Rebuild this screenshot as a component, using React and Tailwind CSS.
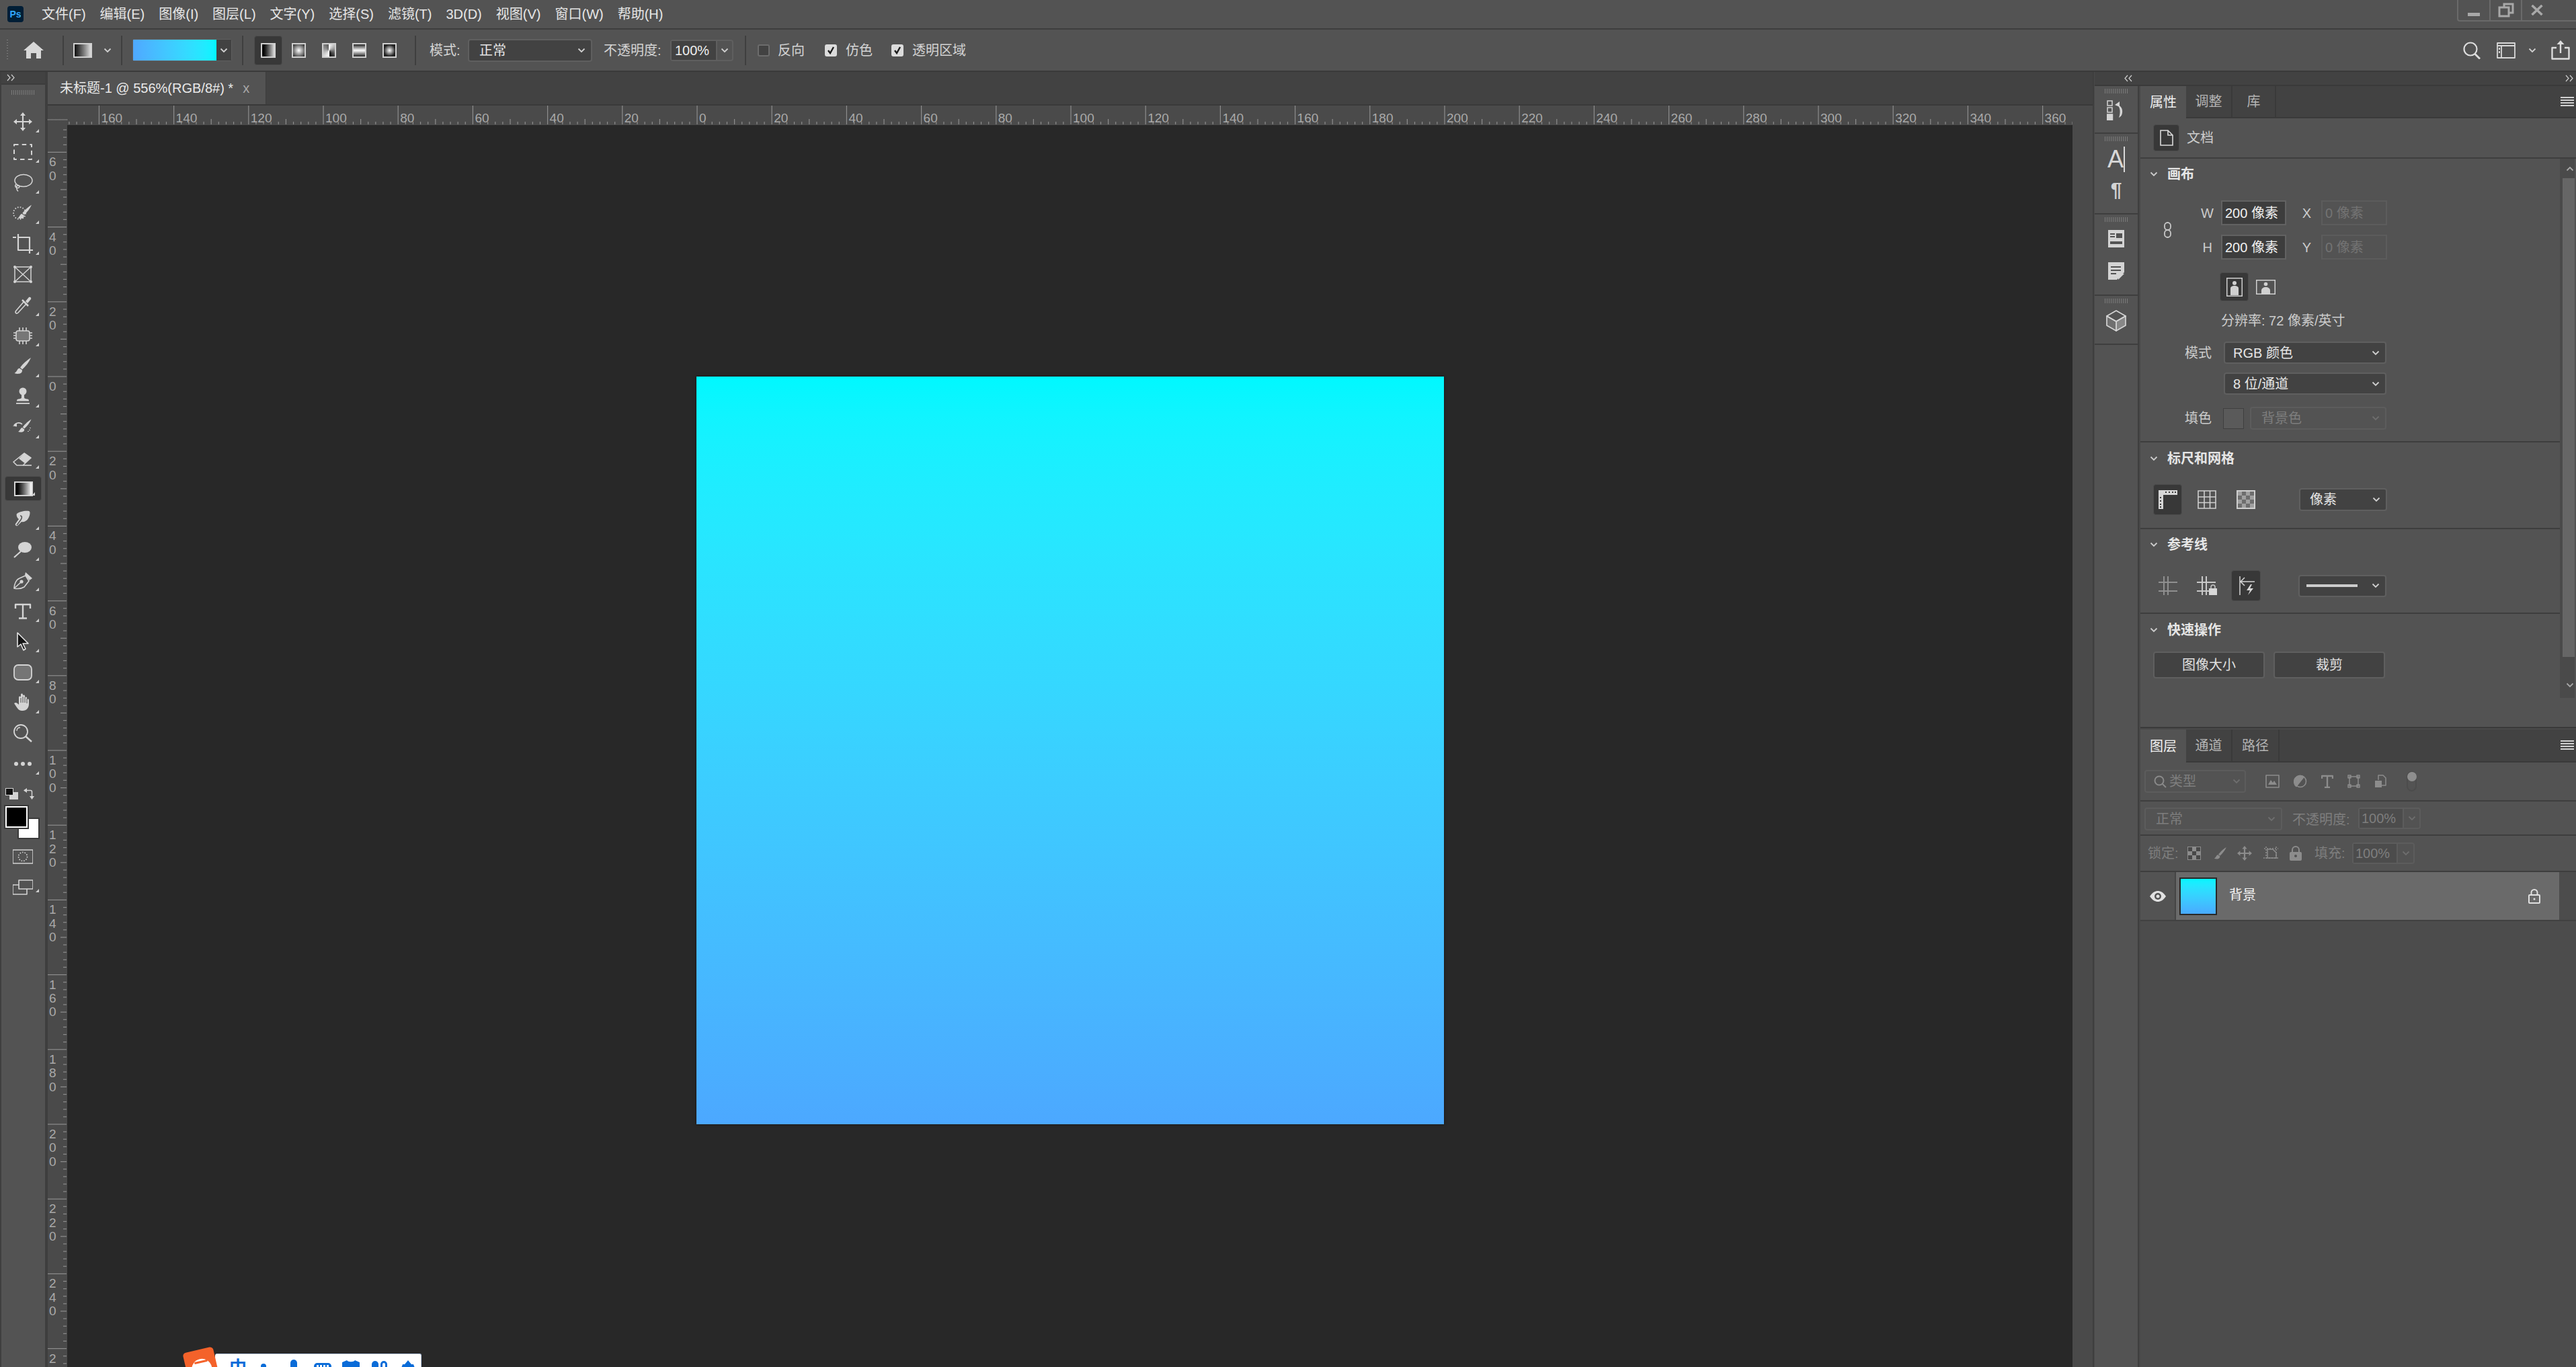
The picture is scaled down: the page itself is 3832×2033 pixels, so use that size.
import React from "react";

const C = "#d4d4d4";

function Chev({ className = "", color = "#cfcfcf" }) {
  return (
    <svg viewBox="0 0 12 8" className={"w-[12px] h-[8px] shrink-0 " + className} fill="none" stroke={color} strokeWidth="1.8">
      <path d="M1.5 1.5 6 6l4.5-4.5" />
    </svg>
  );
}

function Sel({ className = "", children, dis }) {
  return (
    <div className={"flex items-center justify-between border-2 rounded-[4px] pl-[12px] pr-[8px] " + (dis ? "border-[#5c5c5c] text-[#7e7e7e] " : "border-[#5f5f5f] bg-[#424242] text-[#e6e6e6] ") + className}>
      <span className="whitespace-pre">{children}</span>
      <Chev color={dis ? "#6e6e6e" : "#cfcfcf"} />
    </div>
  );
}

function Ico({ children, className = "w-[30px] h-[30px]", stroke = C, sw = 1.7, vb = "0 0 30 30", fill = "none" }) {
  return (
    <svg viewBox={vb} className={"shrink-0 " + className} fill={fill} stroke={stroke} strokeWidth={sw} strokeLinejoin="round">
      {children}
    </svg>
  );
}

const Brush = ({ t = "" }) => (
  <g transform={t} stroke="none" fill={C}>
    <path d="M27 2C22 5 15 11 11 16.500l3 3C19 15 24 9 27 2Z" />
    <path d="M10 17.500C6.500 18 6.500 23 2.500 25c5 2 12 1 11.500-4.500Z" />
  </g>
);

const toolIcons = [
  <Ico key="move">
    <path d="M15 4v22M4 15h22" strokeWidth="2.2" />
    <path d="M15 1l4 5h-8zM15 29l4-5h-8zM1 15l5-4v8zM29 15l-5-4v8z" fill={C} stroke="none" />
  </Ico>,
  <Ico key="marq" sw="2">
    <rect x="2" y="4" width="26" height="22" strokeDasharray="6.500 5.200" />
  </Ico>,
  <Ico key="lasso" sw="1.500">
    <ellipse cx="16" cy="11.500" rx="13" ry="9" />
    <path d="M5 17c-3 3 0 6 3 5.500 3-.5 2-4-1-3.500-2 .5-2 6 1 8.500" />
  </Ico>,
  <Ico key="qs">
    <circle cx="10" cy="15" r="9" strokeDasharray="1.600 2.300" strokeWidth="1.800" />
    <Brush t="translate(5 1) scale(.85)" />
  </Ico>,
  <Ico key="crop" sw="2.200">
    <path d="M0 5h5M8 0v24h18M8 5h17v24M26 24h4" />
  </Ico>,
  <Ico key="frame" sw="1.500">
    <path d="M3 4h24v22H3zM3 4l24 22M27 4 3 26" />
    <g fill={C} stroke="none">
      <circle cx="3" cy="4" r="2" /><circle cx="27" cy="4" r="2" /><circle cx="3" cy="26" r="2" /><circle cx="27" cy="26" r="2" />
    </g>
  </Ico>,
  <Ico key="eye" sw="1.600">
    <path d="M17 9 5 23c-1.500 2-1 3-.5 3.500s2 1 3.500-.5L20 13" />
    <path d="M14 7l9 9" strokeWidth="2.500" />
    <path d="M19 9l5-6c2-1 4 1 3 3l-5 6z" fill={C} stroke="none" />
  </Ico>,
  <Ico key="patch" sw="1.600">
    <rect x="5" y="8" width="20" height="15" rx="3" fill="#777" />
    <path d="M1 11h4M1 15h4M1 19h4M25 11h4M25 15h4M25 19h4M10 3v5M15 3v5M20 3v5M10 23v5M15 23v5M20 23v5" />
  </Ico>,
  <Ico key="brush"><Brush /></Ico>,
  <Ico key="stamp">
    <g fill={C} stroke="none">
      <circle cx="15" cy="7" r="5.500" />
      <path d="M13 11h4v5c0 2 2 2 5 2.500 2 .5 2 2 2 3H6c0-1 0-2.500 2-3 3-.5 5-.5 5-2.500z" />
      <rect x="5" y="24" width="20" height="1.800" />
    </g>
  </Ico>,
  <Ico key="hist">
    <Brush t="translate(6 1) scale(.8)" />
    <path d="M2 11c4-4 9-4 12-1" fill="none" />
    <path d="M0 12.500l6-4v5z" fill={C} stroke="none" />
    <path d="M26 15v1M25 18v1M23 20v1" strokeDasharray="1 2" />
  </Ico>,
  <Ico key="erase" sw="1.600">
    <path d="M1 21 17 8l10 7-12 11H6z" />
    <path d="M17 8l10 7-9 8-9-7z" fill={C} stroke="none" />
    <path d="M15 26h13" />
  </Ico>,
  null,
  <Ico key="smudge">
    <path d="M6 7c4-3 12-5 18-4 3 1 1 8-1 11-2 4-7 6-10 5l-6 6c-2 1-4-1-3-3l5-7c-3-2-4-6-3-8z" fill={C} stroke="none" />
    <path d="M11 10c3 0 3 3 1 6l-6 8" stroke="#535353" strokeWidth="1.600" />
  </Ico>,
  <Ico key="dodge" sw="2.200">
    <ellipse cx="18" cy="11" rx="10" ry="8" fill={C} stroke="none" />
    <path d="M12 17 2 26" />
  </Ico>,
  <Ico key="pen" sw="1.600">
    <path d="M2 27c0-6 3-13 8-15l9-4 5 8-7 9c-5 3-10 3-15 2z" />
    <path d="M2 27 12 18" />
    <circle cx="13" cy="17" r="1.800" fill={C} />
    <path d="M19 3l-1 4 7 8 4-3z" fill={C} stroke="none" />
  </Ico>,
  <Ico key="t" sw="2.600">
    <path d="M15 5v20M4 11V5h22v6M9 25.500h12" strokeWidth="2.400" />
  </Ico>,
  <Ico key="sel" sw="1.600" stroke="#e4e4e4">
    <path d="M7 2v21l5-4 4 9 3-2-4-8h8z" fill="#141414" />
  </Ico>,
  <Ico key="rect" sw="1.800">
    <rect x="2" y="4" width="26" height="22" rx="6" fill="#757575" />
  </Ico>,
  <Ico key="hand">
    <path d="M2 16c2-2 4-1 6 1l1 1V7c0-2 3-2 3 0V3c0-2 3-2 3 0v2c0-2 3-2 3 0v3c0-2 3-2 3 0v3c0-2 3-2 3 0v6c0 6-4 10-9 10s-7-2-9-5z" fill={C} stroke="none" />
    <path d="M12 8v7M15 6v9M18 7v8M21 9v7" stroke="#535353" strokeWidth="1" />
  </Ico>,
  <Ico key="zoom" sw="1.800">
    <circle cx="12" cy="12" r="10" />
    <path d="M6 11c0-3 2-5 5-5" strokeWidth="1.300" />
    <path d="M19 19l9 8" strokeWidth="2.400" />
  </Ico>,
  <Ico key="more">
    <g fill={C} stroke="none"><circle cx="5" cy="15" r="3" /><circle cx="15" cy="15" r="3" /><circle cx="25" cy="15" r="3" /></g>
  </Ico>,
];

const hasCorner = [1,1,1,1,1,0,1,1,1,1,1,1,0,1,1,1,1,1,1,1,0,1];

function Toolbar() {
  return (
    <div className="w-[67px] shrink-0 flex flex-col bg-[#535353] border-l-2 border-[#3f3f3f]">
      <div className="h-[19px] bg-[#424242] border-b-2 border-[#3c3c3c] flex items-center pl-[8px] shrink-0">
        <Collapse dir="right" />
      </div>
      <Grip className="mt-[8px] ml-[15px]" />
      <div className="mt-[17px] flex flex-col">
        {toolIcons.map((ic, i) =>
          ic ? (
            <div key={i} className="relative h-[45.500px] flex items-center justify-center pr-[2px]">
              {ic}
              {hasCorner[i] ? <Corner /> : null}
            </div>
          ) : (
            <div key={i} className="relative h-[37px] my-[4.250px] mx-[5px] flex items-center justify-center bg-[#383838] border border-[#4d4d4d] rounded-[4px]">
              <div className="w-[28px] h-[22px] border-2 border-[#d4d4d4] bg-linear-to-r from-black to-white" />
              <Corner />
            </div>
          )
        )}
      </div>
      <div className="relative mt-[8px] h-[26px] flex items-center justify-between pl-[6px] pr-[14px]">
        <div className="relative w-[19px] h-[17px]">
          <div className="absolute right-0 bottom-0 w-[13px] h-[11px] bg-[#d4d4d4]" />
          <div className="absolute left-0 top-0 w-[12px] h-[11px] bg-[#111] border border-[#d4d4d4]" />
        </div>
        <Ico className="w-[18px] h-[18px]" vb="0 0 18 18" sw="1.500">
          <path d="M1 4.500h9.500a2 2 0 0 1 2 2V16" />
          <path d="M0 4.500 5 1v7zM12.500 18 9 13h7z" fill={C} stroke="none" />
        </Ico>
      </div>
      <div className="relative mt-[6px] h-[50px]">
        <div className="absolute left-[24px] top-[17px] w-[33px] h-[32px] bg-white border-2 border-[#3a3a3a]" />
        <div className="absolute left-[6px] top-0 w-[33px] h-[32px] bg-black border-2 border-white outline-2 outline-[#3a3a3a]" />
      </div>
      <div className="flex justify-center mt-[10px] pr-[2px]">
        <Ico sw="1.600">
          <rect x="0" y="5" width="30" height="20" />
          <circle cx="15" cy="15" r="6.500" strokeDasharray="1.600 2" />
        </Ico>
      </div>
      <div className="relative flex justify-center mt-[15px] pr-[2px]">
        <Ico sw="1.600">
          <path d="M0 12h21v14H0z" />
          <path d="M9 5h21v13H9z" fill="#535353" />
        </Ico>
        <Corner />
      </div>
    </div>
  );
}

function Corner() {
  return <div className="absolute right-[9px] bottom-[7px] w-0 h-0 border-l-[5px] border-l-transparent border-b-[5px] border-b-[#cfcfcf]" />;
}

function Grip({ className = "" }) {
  return <div className={"w-[34px] h-[7px] shrink-0 bg-[repeating-linear-gradient(90deg,#7c7c7c_0,#7c7c7c_1px,transparent_1px,transparent_3px)] " + className} />;
}

function Collapse({ dir }) {
  const d = dir === "right" ? "M1 1l4 4.500-4 4.500M7 1l4 4.500-4 4.500" : "M5 1 1 5.500 5 10M11 1 7 5.500 11 10";
  return (
    <svg viewBox="0 0 12 11" className="w-[12px] h-[11px]" fill="none" stroke="#cfcfcf" strokeWidth="1.200">
      <path d={d} />
    </svg>
  );
}

function Sep() {
  return <div className="w-[2px] h-[44px] bg-[#3f3f3f] shrink-0" />;
}

const gradientTypes = [
  "bg-linear-to-r from-black to-[#dddddd]",
  "bg-[radial-gradient(circle,#ffffff,#222222)]",
  "bg-[conic-gradient(#ffffff,#000000_50%,#ffffff_50%,#555555)]",
  "bg-[linear-gradient(180deg,#222222,#ffffff_50%,#222222)]",
  "bg-[radial-gradient(circle,#ffffff,#222222_70%)]",
];

function Check({ on }) {
  return (
    <div className={"w-[18px] h-[18px] rounded-[3px] border-2 flex items-center justify-center shrink-0 " + (on ? "bg-[#dcdcdc] border-[#dcdcdc]" : "bg-[#424242] border-[#6c6c6c]")}>
      {on ? (
        <svg viewBox="0 0 12 12" className="w-[12px] h-[12px]" fill="none" stroke="#1c1c1c" strokeWidth="2.400">
          <path d="M2 6l3 4 5-9" />
        </svg>
      ) : null}
    </div>
  );
}

function OptionsBar() {
  return (
    <div className="h-[61px] shrink-0 bg-[#535353] flex items-center text-[20px] text-[#d4d4d4]">
      <div className="ml-[10px] w-[2px] h-[32px] bg-[repeating-linear-gradient(180deg,#7c7c7c_0,#7c7c7c_1px,transparent_1px,transparent_4px)]" />
      <svg viewBox="0 0 30 25" className="ml-[23px] w-[30px] h-[25px]" fill="#d8d8d8">
        <path d="M15 0 30 13h-4v12h-7v-8h-8v8H4V13H0z" />
      </svg>
      <div className="ml-[28px]"><Sep /></div>
      <div className="ml-[14px] w-[28px] h-[22px] border-2 border-[#d0d0d0] bg-linear-to-r from-[#111] to-[#dddddd]" />
      <Chev className="ml-[17px]" />
      <div className="ml-[14px]"><Sep /></div>
      <div className="ml-[15px] flex h-[33px] w-[148px] border border-[#5f5f5f] rounded-[3px]">
        <div className="w-[124px] bg-linear-to-r from-[#4fa8ff] to-[#00f6ff]" />
        <div className="flex-1 bg-[#424242] flex items-center justify-center"><Chev /></div>
      </div>
      <div className="ml-[15px]"><Sep /></div>
      <div className="ml-[16px] w-[42px] h-[44px] bg-[#383838] border border-[#4d4d4d] rounded-[4px] flex items-center justify-center">
        <div className={"w-[22px] h-[22px] border-2 border-[#d0d0d0] " + gradientTypes[0]} />
      </div>
      <div className="ml-[14px] flex gap-[24px]">
        {gradientTypes.slice(1).map((g, i) => (
          <div key={i} className={"w-[21px] h-[22px] border-2 border-[#d0d0d0] " + g} />
        ))}
      </div>
      <div className="ml-[27px]"><Sep /></div>
      <span className="ml-[20px] w-[47px]">模式:</span>
      <Sel className="ml-[10px] w-[185px] h-[34px] pl-[15px]">正常</Sel>
      <span className="ml-[17px] w-[90px] whitespace-nowrap">不透明度:</span>
      <div className="ml-[9px] w-[94px] h-[32px] flex border-2 border-[#5f5f5f] rounded-[4px]">
        <div className="w-[68px] bg-[#424242] border-r-2 border-[#5f5f5f] text-[#eeeeee] pl-[5px] flex items-center">100%</div>
        <div className="flex-1 flex items-center justify-center"><Chev /></div>
      </div>
      <div className="ml-[17px]"><Sep /></div>
      <div className="ml-[17px]"><Check /></div>
      <span className="ml-[12px]">反向</span>
      <div className="ml-[30px]"><Check on /></div>
      <span className="ml-[13px]">仿色</span>
      <div className="ml-[28px]"><Check on /></div>
      <span className="ml-[13px]">透明区域</span>
      <div className="ml-auto flex items-center">
        <Ico className="w-[26px] h-[26px]" vb="0 0 26 26" stroke="#dddddd" sw="2.200">
          <circle cx="11" cy="11" r="9.500" />
          <path d="M17.500 18 25 25.500" strokeWidth="2.800" />
        </Ico>
        <Ico className="ml-[24px] w-[28px] h-[24px]" vb="0 0 28 24" stroke="#d8d8d8" sw="1.800">
          <path d="M1 1h26v22H1zM1 5h26M7 5v18" />
          <path d="M3 8h2v3H3zM3 13h2v3H3z" fill="#d8d8d8" stroke="none" />
        </Ico>
        <Chev className="ml-[19px]" />
        <Ico className="ml-[22px] mr-[9px] w-[28px] h-[29px]" vb="0 0 28 29" stroke="#dddddd" sw="2.400">
          <path d="M8 11H1.500v16.500h25V11H20M14 19V2" />
          <path d="M14 0l5.500 6h-11z" fill="#dddddd" stroke="none" />
        </Ico>
      </div>
    </div>
  );
}

const menus = ["文件(F)", "编辑(E)", "图像(I)", "图层(L)", "文字(Y)", "选择(S)", "滤镜(T)", "3D(D)", "视图(V)", "窗口(W)", "帮助(H)"];

function MenuBar() {
  return (
    <div className="h-[42px] shrink-0 bg-[#535353] flex items-center text-[20px] text-[#e6e6e6]">
      <div className="ml-[11px] w-[24px] h-[24px] rounded-[4px] bg-[#001e36] flex items-center justify-center text-[14px] font-bold text-[#31a8ff]">Ps</div>
      <div className="ml-[27px] flex gap-[21px] whitespace-nowrap">
        {menus.map((m) => <span key={m}>{m}</span>)}
      </div>
      <div className="ml-auto self-start flex h-[32px] w-[177px] border-l-2 border-b-2 border-[#6a6a6a] rounded-bl-[4px]">
        <div className="w-[48px] border-r-2 border-[#6a6a6a] flex items-end justify-center pb-[6px]">
          <div className="w-[18px] h-[5px] bg-[#a8a8a8]" />
        </div>
        <div className="w-[47px] border-r-2 border-[#6a6a6a] flex items-center justify-center">
          <svg viewBox="0 0 24 22" className="w-[24px] h-[22px]" fill="none" stroke="#a8a8a8" strokeWidth="3">
            <path d="M9 6V2h13v13h-6M2 7h14v13H2z" />
          </svg>
        </div>
        <div className="w-[44px] flex items-center justify-center">
          <svg viewBox="0 0 18 16" className="w-[18px] h-[16px]" fill="none" stroke="#a8a8a8" strokeWidth="3.500">
            <path d="M1.500 1 16.500 15M16.500 1 1.500 15" />
          </svg>
        </div>
      </div>
    </div>
  );
}

const S = 5.56;
function range(a, b, st) {
  const r = [];
  for (let i = a; i <= b; i += st) r.push(i);
  return r;
}

function HRuler() {
  return (
    <svg width="2983" height="29" className="block shrink-0" stroke="#8d8d8d" strokeWidth="1.200" fontFamily="Liberation Sans" fontSize="19">
      {range(-180, 370, 2).map((u) => {
        const x = 937 + u * S;
        const h = u % 20 === 0 ? 28 : u % 10 === 0 ? 8 : 4;
        return <line key={u} x1={x} x2={x} y1={28 - h} y2={28} />;
      })}
      {range(-160, 360, 20).map((u) => (
        <text key={u} x={937 + u * S + 3} y={25} fill="#a9a9a9" stroke="none">{Math.abs(u)}</text>
      ))}
    </svg>
  );
}

function VRuler() {
  return (
    <svg width="29" height="1847" className="block shrink-0" stroke="#8d8d8d" strokeWidth="1.200" fontFamily="Liberation Sans" fontSize="19">
      {range(-66, 270, 2).map((u) => {
        const y = 374 + u * S;
        const major = u % 20 === 0;
        const med = u % 10 === 0;
        return <line key={u} y1={y} y2={y} x1={major ? 0 : med ? 19 : 23} x2={28} />;
      })}
      {range(-60, 260, 20).map((u) =>
        String(Math.abs(u)).split("").map((d, i) => (
          <text key={u + "-" + i} x="2" y={374 + u * S + 21 + i * 20.4} fill="#a9a9a9" stroke="none">{d}</text>
        ))
      )}
    </svg>
  );
}

function DocArea() {
  return (
    <div className="w-[3042px] shrink-0 flex flex-col bg-[#4a4a4a] border-r-0">
      <div className="h-[50px] shrink-0 bg-[#424242] border-b-2 border-[#393939]">
        <div className="w-[325px] h-[48px] bg-[#535353] border-r border-[#3c3c3c] flex items-center pl-[18px] text-[20px] text-[#e8e8e8] whitespace-nowrap">
          <span>未标题-1 @ 556%(RGB/8#) *</span>
          <span className="ml-[14px] text-[#a8a8a8]">x</span>
        </div>
      </div>
      <div className="h-[29px] shrink-0 flex">
        <div className="w-[29px] h-[29px] shrink-0 flex flex-col justify-end">
          <div className="h-[2px] mb-[7px] bg-[repeating-linear-gradient(90deg,#8d8d8d_0,#8d8d8d_1px,transparent_1px,transparent_2px)]" />
        </div>
        <HRuler />
      </div>
      <div className="flex-1 flex min-h-0 overflow-hidden">
        <VRuler />
        <div className="w-[2983px] shrink-0 bg-[#282828] flex justify-center items-start pt-[374px]">
          <div className="w-[1112px] h-[1112px] bg-linear-to-b from-[#00f8ff] to-[#4ca8ff] shadow-[0_0_4px_#00000080]" />
        </div>
      </div>
    </div>
  );
}

function DockSec({ h, children, className = "" }) {
  return (
    <div className={"border-b-2 border-[#3e3e3e] flex flex-col items-center pt-[4px] shrink-0 " + h + " " + className}>
      <Grip />
      {children}
    </div>
  );
}

function Dock() {
  return (
    <div className="w-[66px] shrink-0 bg-[#535353] flex flex-col border-r-2 border-[#3e3e3e]">
      <DockSec h="h-[71px]">
        <svg viewBox="0 0 28 30" className="mt-[10px] w-[28px] h-[30px]" fill="none" stroke={C} strokeWidth="1.500">
          <rect x="1" y="1" width="7" height="7" />
          <rect x="1" y="11" width="7" height="7" />
          <rect x="0.500" y="21" width="8" height="8.500" fill={C} />
          <path d="M16 7c5 1 8 6 7 12-.5 4-3 6-5 7 2-5 3-14-2-19z" fill={C} stroke="none" />
          <path d="M12 7l7-5v8z" fill={C} stroke="none" />
        </svg>
      </DockSec>
      <DockSec h="h-[120px]" >
        <div className="mt-[7px] flex items-end text-[36px] leading-[40px] text-[#d8d8d8]">
          <span>A</span><div className="w-[2px] h-[38px] bg-[#d8d8d8] mb-[1px]" />
        </div>
        <div className="mt-[9px] text-[30px] leading-[32px] text-[#d4d4d4] font-bold">¶</div>
      </DockSec>
      <DockSec h="h-[121px]">
        <svg viewBox="0 0 24 26" className="mt-[12px] w-[24px] h-[26px]" fill={C}>
          <path d="M0 0h24v26H0z" />
          <path d="M3 5h7v2H3zM3 9h7v2H3zM12 5h9v7h-9zM3 17h18v4H3z" fill="#535353" />
        </svg>
        <svg viewBox="0 0 24 26" className="mt-[22px] w-[24px] h-[26px]" fill={C}>
          <path d="M0 0h24v15l-11 11H0z" />
          <path d="M15 17h9l-9 9z" />
          <path d="M4 6h15v2H4zM4 11h15v2H4zM4 16h8v2H4z" fill="#535353" />
        </svg>
      </DockSec>
      <DockSec h="h-[73px]">
        <svg viewBox="0 0 30 32" className="mt-[10px] w-[30px] h-[32px]" fill="none" stroke={C} strokeWidth="1.700" strokeLinejoin="round">
          <path d="M15 17 29 9v14l-14 8z" fill="#888888" />
          <path d="M15 17 1 9v14l14 8z" fill="#707070" />
          <path d="M15 1 1 9l14 8 14-8z" />
        </svg>
      </DockSec>
    </div>
  );
}

function Tabs({ items, h }) {
  return (
    <div className={"flex shrink-0 bg-[#424242] border-b-2 border-[#3a3a3a] text-[20px] " + h}>
      {items.map(([t, w], i) => (
        <div key={t} className={"flex items-center justify-center shrink-0 " + w + (i === 0 ? " bg-[#535353] text-[#f0f0f0] h-[calc(100%+2px)]" : " text-[#b4b4b4] border-r-2 border-[#3a3a3a]")}>
          {t}
        </div>
      ))}
      <div className="ml-auto mr-[3px] mt-[16px] w-[20px] h-[14px] bg-[repeating-linear-gradient(180deg,#d0d0d0_0,#d0d0d0_2px,transparent_2px,transparent_4px)]" />
    </div>
  );
}

function Head({ children, h }) {
  return (
    <div className={"flex items-center pl-[13px] shrink-0 " + h}>
      <Chev className="w-[14px]" color="#cccccc" />
      <span className="ml-[13px] font-bold text-[#e6e6e6]">{children}</span>
    </div>
  );
}

function Field({ label, value, dis }) {
  return (
    <div className={"h-[37px] flex items-center border-2 pl-[4px] whitespace-pre " + (dis ? "w-[98px] border-[#5c5c5c] text-[#737373]" : "w-[97px] border-[#626262] bg-[#3d3d3d] text-[#f0f0f0]")}>
      {value}
    </div>
  );
}

function PropertiesBody() {
  return (
    <div className="h-[847px] shrink-0 flex text-[20px] text-[#cccccc] border-b-2 border-[#3a3a3a]">
      <div className="w-[624px] shrink-0 flex flex-col">
        {/* canvas */}
        <div className="h-[422px] shrink-0 border-b-2 border-[#3e3e3e] flex flex-col">
          <Head h="h-[46px]">画布</Head>
          <div className="mt-[16px] flex items-center pl-[34px]">
            <svg viewBox="0 0 13 24" className="w-[13px] h-[24px] shrink-0" fill="none" stroke="#c8c8c8" strokeWidth="1.800">
              <rect x="2" y="1" width="9" height="11" rx="4.500" />
              <rect x="2" y="12" width="9" height="11" rx="4.500" />
            </svg>
            <div className="flex flex-col gap-[14px]">
              <div className="flex items-center">
                <span className="w-[62px] text-right">W</span>
                <div className="ml-[11px]"><Field value="200 像素" /></div>
                <span className="w-[52px] text-right pr-[15px]">X</span>
                <Field dis value="0 像素" />
              </div>
              <div className="flex items-center">
                <span className="w-[62px] text-right pr-[2px]">H</span>
                <div className="ml-[11px]"><Field value="200 像素" /></div>
                <span className="w-[52px] text-right pr-[15px]">Y</span>
                <Field dis value="0 像素" />
              </div>
            </div>
          </div>
          <div className="mt-[19px] ml-[118px] flex items-center">
            <div className="w-[43px] h-[43px] rounded-[4px] bg-[#383838] border border-[#4d4d4d] flex items-center justify-center">
              <svg viewBox="0 0 24 28" className="w-[24px] h-[28px]" fill="#d0d0d0" stroke="#d0d0d0">
                <path d="M.75.75h22.500v26.500H.75z" fill="none" strokeWidth="1.500" />
                <circle cx="12" cy="8" r="3" stroke="none" />
                <path d="M6 26v-10c0-3 3-4 6-4s6 1 6 4v10z" stroke="none" />
              </svg>
            </div>
            <svg viewBox="0 0 29 22" className="ml-[11px] w-[29px] h-[22px]" fill="#d0d0d0" stroke="#d0d0d0">
              <path d="M.75.75h27.500v20.500H.75z" fill="none" strokeWidth="1.500" />
              <circle cx="14.500" cy="6.500" r="2.800" stroke="none" />
              <path d="M8 21v-5c0-3 3-5 6.500-5s6.500 2 6.500 5v5z" stroke="none" />
            </svg>
          </div>
          <div className="mt-[17px] h-[24px] ml-[120px] flex items-center">分辨率: 72 像素/英寸</div>
          <div className="mt-[19px] flex items-center">
            <span className="ml-[66px] w-[40px] whitespace-nowrap">模式</span>
            <Sel className="ml-[18px] w-[242px] h-[33px]">RGB 颜色</Sel>
          </div>
          <Sel className="mt-[13px] ml-[124px] w-[242px] h-[33px] shrink-0">8 位/通道</Sel>
          <div className="mt-[18px] flex items-center">
            <span className="ml-[66px] w-[40px] whitespace-nowrap">填色</span>
            <div className="ml-[17px] w-[31px] h-[31px] border border-[#3f3f3f] bg-[#5a5a5a]" />
            <Sel dis className="ml-[9px] w-[203px] h-[34px] pl-[15px]">背景色</Sel>
          </div>
        </div>
        {/* ruler */}
        <div className="h-[129px] shrink-0 border-b-2 border-[#3e3e3e] flex flex-col">
          <Head h="h-[48px]">标尺和网格</Head>
          <div className="mt-[14px] ml-[19px] flex items-center gap-[15px]">
            <div className="w-[43px] h-[46px] rounded-[4px] bg-[#383838] border border-[#4d4d4d] flex items-center justify-center">
              <svg viewBox="0 0 28 28" className="w-[28px] h-[28px]" fill="#d6d6d6">
                <path d="M0 0h28v7H7v21H0z" />
                <path d="M10 2h2v2h-2zM15 2h2v2h-2zM20 2h2v2h-2zM24 2h2v2h-2zM2 10h2v2H2zM2 15h2v2H2zM2 20h2v2H2zM2 24h2v2H2z" fill="#383838" />
              </svg>
            </div>
            <div className="w-[43px] flex justify-center">
              <svg viewBox="0 0 28 28" className="w-[28px] h-[28px]" fill="none" stroke="#cfcfcf" strokeWidth="1.600">
                <path d="M1 1h26v26H1zM10 1v26M18.500 1v26M1 10h26M1 18.500h26" />
              </svg>
            </div>
            <div className="w-[44px] flex justify-center">
              <div className="w-[28px] h-[28px] border-2 border-[#cfcfcf] bg-[length:12px_12px] bg-[conic-gradient(#6e6e6e_25%,#a0a0a0_0_50%,#6e6e6e_0_75%,#a0a0a0_0)]" />
            </div>
            <Sel className="ml-[42px] w-[131px] h-[34px] pl-[14px]">像素</Sel>
          </div>
        </div>
        {/* guides */}
        <div className="h-[126px] shrink-0 border-b-2 border-[#3e3e3e] flex flex-col">
          <Head h="h-[46px]">参考线</Head>
          <div className="mt-[15px] ml-[19px] flex items-center gap-[15px]">
            <div className="w-[43px] flex justify-center">
              <svg viewBox="0 0 28 28" className="w-[28px] h-[28px]" fill="none" stroke="#8f8f8f" strokeWidth="2">
                <path d="M8 0v28M14 0v28M0 9h28M0 22h28" />
              </svg>
            </div>
            <div className="w-[43px] flex justify-center">
              <svg viewBox="0 0 30 28" className="w-[30px] h-[28px]" fill="none" stroke="#c8c8c8" strokeWidth="2">
                <path d="M8 0v28M14 0v28M0 9h28M0 22h18" />
                <rect x="18" y="18" width="12" height="10" fill="#d8d8d8" stroke="none" />
                <path d="M21 18v-2a3 3 0 0 1 6 0v2" strokeWidth="1.500" />
              </svg>
            </div>
            <div className="w-[44px] h-[46px] rounded-[4px] bg-[#383838] border border-[#4d4d4d] flex items-center justify-center">
              <svg viewBox="0 0 30 30" className="w-[30px] h-[30px]" fill="none" stroke="#d4d4d4" strokeWidth="1.500">
                <path d="M6 1v28M6 9h22M7 9l6-6M7 9l6 6" />
                <path d="M22 13l-6 9h5l-3 7 8-10h-5l3-6z" fill="#d8d8d8" stroke="none" />
              </svg>
            </div>
            <div className="ml-[41px] w-[131px] h-[33px] rounded-[4px] border-2 border-[#5f5f5f] bg-[#424242] flex items-center justify-between pl-[10px] pr-[8px]">
              <div className="w-[76px] h-[4px] bg-[#cccccc]" />
              <Chev />
            </div>
          </div>
        </div>
        {/* quick */}
        <div className="flex flex-col">
          <Head h="h-[48px]">快速操作</Head>
          <div className="mt-[8px] ml-[19px] flex gap-[13px] text-[#e0e0e0]">
            <div className="w-[166px] h-[40px] rounded-[4px] bg-[#424242] border-2 border-[#5f5f5f] flex items-center justify-center">图像大小</div>
            <div className="w-[166px] h-[40px] rounded-[4px] bg-[#424242] border-2 border-[#5f5f5f] flex items-center justify-center">裁剪</div>
          </div>
        </div>
      </div>
      <div className="w-[22px] shrink-0 self-start h-[802px] bg-[#4a4a4a] flex flex-col">
        <div className="h-[29px] flex items-center justify-end pr-[1px]"><Chev className="rotate-180" color="#a8a8a8" /></div>
        <div className="ml-[4px] h-[712px] bg-[#666666]" />
        <div className="flex-1 flex items-center justify-end pr-[1px] pt-[22px]"><Chev color="#a8a8a8" /></div>
      </div>
    </div>
  );
}

function LayersPanel() {
  return (
    <div className="flex-1 flex flex-col min-h-0 text-[20px] bg-[#4c4c4c]">
      <Tabs items={[["图层", "w-[68px]"], ["通道", "w-[69px]"], ["路径", "w-[70px]"]]} h="h-[49px]" />
      <div className="h-[58px] shrink-0 bg-[#535353] border-b-2 border-[#3e3e3e] flex items-center pl-[6px]">
        <div className="w-[151px] h-[34px] border-2 border-[#5c5c5c] rounded-[4px] flex items-center justify-between pl-[12px] pr-[6px] text-[#7e7e7e]">
          <div className="flex items-center">
            <Ico className="w-[19px] h-[19px]" vb="0 0 19 19" stroke="#8a8a8a" sw="2">
              <circle cx="8" cy="8" r="6.500" /><path d="M13 13l5 5" />
            </Ico>
            <span className="ml-[4px]">类型</span>
          </div>
          <Chev color="#6e6e6e" />
        </div>
        <div className="ml-[29px] flex items-center gap-[21px]">
          <Ico className="w-[21px] h-[20px]" vb="0 0 21 20" stroke="#8c8c8c" sw="1.600">
            <path d="M1 1h19v18H1z" /><path d="M4 15l4-7 3 4 2-3 4 6z" fill="#8c8c8c" stroke="none" />
          </Ico>
          <Ico className="w-[20px] h-[20px]" vb="0 0 20 20" stroke="#8c8c8c" sw="1.600">
            <circle cx="10" cy="10" r="8.500" /><path d="M15 3.500 4 17.500a8.500 8.500 0 0 1 11-14z" fill="#8c8c8c" />
          </Ico>
          <Ico className="w-[18px] h-[20px]" vb="0 0 18 20" stroke="#8c8c8c" sw="2.400">
            <path d="M9 1v18M1 6V2h16v4M5 19h8" />
          </Ico>
          <Ico className="w-[19px] h-[20px]" vb="0 0 19 20" stroke="#8c8c8c" sw="1.500">
            <path d="M3 3h13v14H3z" />
            <rect x="1" y="1" width="4" height="4" /><rect x="14" y="1" width="4" height="4" /><rect x="1" y="15" width="4" height="4" /><rect x="14" y="15" width="4" height="4" />
          </Ico>
          <Ico className="w-[18px] h-[20px]" vb="0 0 18 20" stroke="#8c8c8c" sw="1.500">
            <path d="M6 8V1h7l4 4v11H11" /><rect x="1" y="9" width="10" height="10" fill="#8c8c8c" stroke="none" />
          </Ico>
        </div>
        <div className="ml-[30px] w-[15px] h-[30px] rounded-full border-2 border-[#4c4c4c] relative">
          <div className="absolute -left-[1px] -top-[1px] w-[14px] h-[14px] rounded-full bg-[#8e8e8e]" />
        </div>
      </div>
      <div className="h-[51px] shrink-0 bg-[#535353] border-b-2 border-[#3e3e3e] flex items-start pt-[9px] pl-[6px] text-[#7e7e7e]">
        <Sel dis className="w-[205px] h-[34px] pl-[15px]">正常</Sel>
        <span className="ml-[15px] w-[90px] whitespace-nowrap mt-[3px]">不透明度:</span>
        <div className="ml-[8px] w-[93px] h-[32px] flex border-2 border-[#5c5c5c] rounded-[4px]">
          <div className="w-[66px] border-r-2 border-[#5c5c5c] flex items-center pl-[3px] bg-[#4c4c4c]">100%</div>
          <div className="flex-1 flex items-center justify-center"><Chev color="#6e6e6e" /></div>
        </div>
      </div>
      <div className="h-[54px] shrink-0 bg-[#535353] border-b-2 border-[#3e3e3e] flex items-center pl-[11px] text-[#7e7e7e]">
        <span className="w-[50px] whitespace-nowrap">锁定:</span>
        <div className="ml-[9px] w-[20px] h-[20px] border border-[#8c8c8c] bg-[length:12px_12px] bg-[conic-gradient(#8c8c8c_25%,#484848_0_50%,#8c8c8c_0_75%,#484848_0)]" />
        <Ico className="ml-[18px] w-[22px] h-[23px]" vb="0 0 30 30"><g stroke="none" fill="#8c8c8c"><path d="M27 2C22 5 15 11 11 16.500l3 3C19 15 24 9 27 2Z" /><path d="M10 17.500C6.500 18 6.500 23 2.500 25c5 2 12 1 11.500-4.500Z" /></g></Ico>
        <Ico className="ml-[14px] w-[22px] h-[22px]" vb="0 0 30 30" stroke="#8c8c8c" sw="3">
          <path d="M15 4v22M4 15h22" /><path d="M15 0l5 6H10zM15 30l5-6H10zM0 15l6-5v10zM30 15l-6-5v10z" fill="#8c8c8c" stroke="none" />
        </Ico>
        <Ico className="ml-[16px] w-[25px] h-[22px]" vb="0 0 25 22" stroke="#8c8c8c" sw="1.500">
          <path d="M2 4h21M5 1v20M1 18h23M20 1v20" strokeDasharray="2 2" />
          <path d="M7 5h8l5 5v8H7z" />
        </Ico>
        <Ico className="ml-[15px] w-[18px] h-[22px]" vb="0 0 18 22" stroke="#8c8c8c" sw="2">
          <rect x="0" y="9" width="18" height="13" rx="2" fill="#8c8c8c" stroke="none" />
          <path d="M4 9V6a5 5 0 0 1 10 0v3" />
          <circle cx="9" cy="15" r="2" fill="#535353" stroke="none" />
        </Ico>
        <span className="ml-[19px] w-[50px] whitespace-nowrap">填充:</span>
        <div className="ml-[6px] w-[93px] h-[32px] flex border-2 border-[#5c5c5c] rounded-[4px]">
          <div className="w-[66px] border-r-2 border-[#5c5c5c] flex items-center pl-[3px] bg-[#4c4c4c]">100%</div>
          <div className="flex-1 flex items-center justify-center"><Chev color="#6e6e6e" /></div>
        </div>
      </div>
      <div className="h-[73px] shrink-0 flex border-b-2 border-[#414141]">
        <div className="w-[53px] bg-[#535353] border-r-2 border-[#454545] flex items-center justify-center">
          <svg viewBox="0 0 24 16" className="w-[24px] h-[16px]" fill="#e2e2e2">
            <path d="M0 8c4-6 8-8 12-8s8 2 12 8c-4 6-8 8-12 8S4 14 0 8z" />
            <circle cx="12" cy="8" r="5" fill="#535353" />
            <circle cx="12" cy="8" r="2.500" fill="#e2e2e2" />
          </svg>
        </div>
        <div className="w-[570px] bg-[#6a6a6a] flex items-center pl-[5px] text-[#f4f4f4]">
          <div className="w-[56px] h-[56px] border-2 border-[#282828] bg-linear-to-b from-[#00f6ff] to-[#49aaff]" />
          <span className="ml-[18px] -mt-[3px]">背景</span>
          <svg viewBox="0 0 18 22" className="ml-auto mr-[28px] w-[18px] h-[22px]" fill="none" stroke="#e0e0e0" strokeWidth="2">
            <rect x="1" y="9" width="16" height="12" rx="1" />
            <path d="M4.500 9V5.500a4.500 4.500 0 0 1 9 0V9" />
            <circle cx="9" cy="15" r="1.500" fill="#e0e0e0" stroke="none" />
          </svg>
        </div>
      </div>
    </div>
  );
}

function RightArea() {
  return (
    <div className="flex-1 flex flex-col min-w-0 border-l border-[#4a4a4a] ml-[2px]">
      <div className="h-[19px] shrink-0 bg-[#424242] flex items-center justify-between pl-[44px] pr-[4px]">
        <Collapse dir="left" />
        <Collapse dir="right" />
      </div>
      <div className="h-[2px] shrink-0 bg-[#3a3a3a]" />
      <div className="flex-1 flex min-h-0">
        <Dock />
        <div className="w-[2px] shrink-0 bg-[#484848]" />
        <div className="flex-1 flex flex-col min-w-0 bg-[#535353]">
          <Tabs items={[["属性", "w-[68px]"], ["调整", "w-[69px]"], ["库", "w-[65px]"]]} h="h-[48px]" />
          <div className="h-[60px] shrink-0 border-b-2 border-[#3e3e3e] flex items-center pl-[19px] text-[20px] text-[#cccccc]">
            <div className="w-[39px] h-[40px] rounded-[4px] bg-[#383838] border border-[#4d4d4d] flex items-center justify-center">
              <svg viewBox="0 0 20 24" className="w-[20px] h-[24px]" fill="none" stroke="#dadada" strokeWidth="1.600">
                <path d="M1 1h11l7 7v15H1zM12 1v7h7" />
              </svg>
            </div>
            <span className="ml-[11px]">文档</span>
          </div>
          <PropertiesBody />
          <div className="h-[2px] shrink-0 bg-[#4a4a4a]" />
          <LayersPanel />
        </div>
      </div>
    </div>
  );
}

function Ime() {
  return (
    <div className="absolute left-[320px] top-[2013px] w-[307px] h-[30px] bg-white rounded-t-[3px] border-t border-r border-[#b8cbe6] text-[#0a6cd8]">
      <div className="absolute -left-[44px] -top-[7px] w-[46px] h-[46px] rounded-[5px] bg-[#f4622a] -rotate-[13deg] flex items-start justify-center overflow-hidden">
        <div className="mt-[14px] w-[30px] h-[30px] rounded-full bg-white relative">
          <div className="absolute left-[6px] top-[3px] w-[20px] h-[3px] bg-[#f4622a] rounded-full" />
        </div>
      </div>
      <span className="absolute left-[21px] top-[5px] text-[26px] font-bold leading-[30px]">中</span>
      <div className="absolute left-[68px] top-[14px] w-[8px] h-[8px] rounded-full bg-[#0a6cd8]" />
      <div className="absolute left-[112px] top-[8px] w-[10px] h-[20px] rounded-t-full bg-[#0a6cd8]" />
      <div className="absolute left-[147px] top-[13px] w-[26px] h-[20px] rounded-t-[5px] bg-[#0a6cd8] flex gap-[2px] justify-center pt-[3px]">
        <i className="w-[3px] h-[3px] bg-white" /><i className="w-[3px] h-[3px] bg-white" /><i className="w-[3px] h-[3px] bg-white" /><i className="w-[3px] h-[3px] bg-white" />
      </div>
      <svg viewBox="0 0 26 14" className="absolute left-[189px] top-[9px] w-[26px] h-[14px]" fill="#0a6cd8">
        <path d="M0 3l7-3c2 3 10 3 12 0l7 3v11H0z" />
      </svg>
      <div className="absolute left-[233px] top-[10px] w-[10px] h-[20px] rounded-t-full bg-[#0a6cd8]" />
      <div className="absolute left-[246px] top-[10px] w-[10px] h-[20px] rounded-t-full border-[3px] border-[#0a6cd8]" />
      <svg viewBox="0 0 22 14" className="absolute left-[276px] top-[9px] w-[22px] h-[14px]" fill="#0a6cd8">
        <path d="M11 0l5 6h3l3 8H0l3-8h3z" />
      </svg>
    </div>
  );
}

export default function App() {
  return (
    <div className="relative w-[3832px] h-[2033px] overflow-hidden bg-[#3e3e3e] flex flex-col font-['Liberation_Sans','Noto_Sans_CJK_SC',sans-serif]">
      <MenuBar />
      <div className="h-[2px] shrink-0 bg-[#3e3e3e]" />
      <OptionsBar />
      <div className="h-[2px] shrink-0 bg-[#3a3a3a]" />
      <div className="flex-1 flex min-h-0">
        <Toolbar />
        <div className="w-[4px] shrink-0 bg-[#3e3e3e]" />
        <DocArea />
        <RightArea />
      </div>
      <Ime />
    </div>
  );
}
